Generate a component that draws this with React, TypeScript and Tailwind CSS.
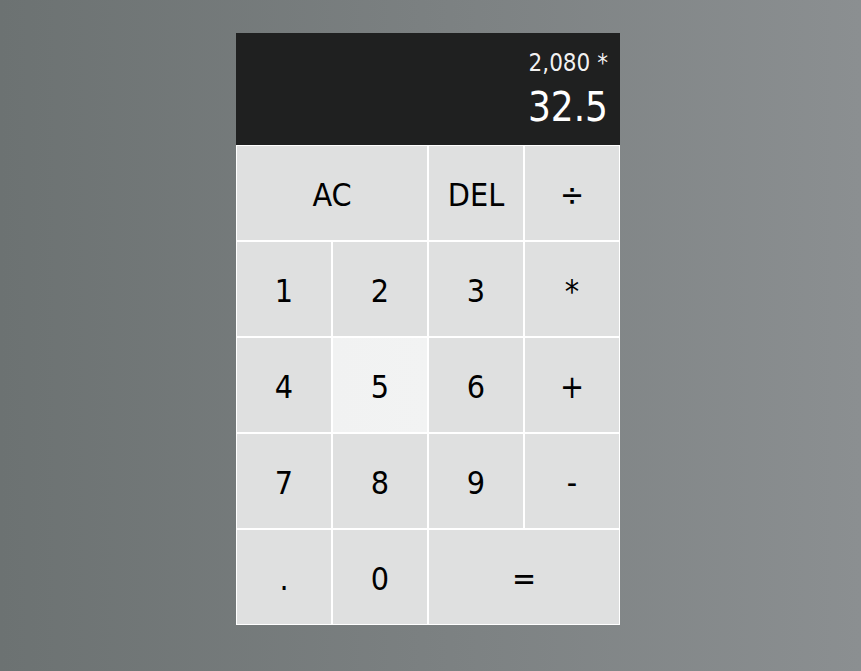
const keys: { label: string; wide?: boolean; hover?: boolean }[] = [
  { label: "AC", wide: true },
  { label: "DEL" },
  { label: "÷" },
  { label: "1" },
  { label: "2" },
  { label: "3" },
  { label: "*" },
  { label: "4" },
  { label: "5", hover: true },
  { label: "6" },
  { label: "+" },
  { label: "7" },
  { label: "8" },
  { label: "9" },
  { label: "-" },
  { label: "." },
  { label: "0" },
  { label: "=", wide: true },
];

export default function App() {
  return (
    <div
      className="h-screen w-full overflow-hidden bg-gradient-to-r from-[#6c7272] to-[#8b8f91] flex justify-center pt-[33px] pr-[5px]"
      style={{ fontFamily: '"DejaVu Sans Condensed", "DejaVu Sans", sans-serif' }}
    >
      <div className="grid grid-cols-[repeat(4,96px)] grid-rows-[112px_repeat(5,96px)] h-fit">
        {/* Output */}
        <div className="col-span-4 bg-[#1f2020] flex flex-col items-end justify-end gap-[7px] pr-[12px] pb-[15px] break-all">
          <div className="text-white/95 text-[24px] leading-[28px]">2,080 *</div>
          <div className="text-white text-[40px] leading-[46px]">32.5</div>
        </div>

        {keys.map((k) => (
          <button
            key={k.label}
            className={`border border-white text-[32px] text-black pt-[4px] cursor-pointer outline-none ${
              k.wide ? "col-span-2" : ""
            } ${k.hover ? "bg-gradient-to-r from-[#f1f2f2] to-[#f2f3f3]" : "bg-[#dfe0e0]"}`}
          >
            {k.label}
          </button>
        ))}
      </div>
    </div>
  );
}
